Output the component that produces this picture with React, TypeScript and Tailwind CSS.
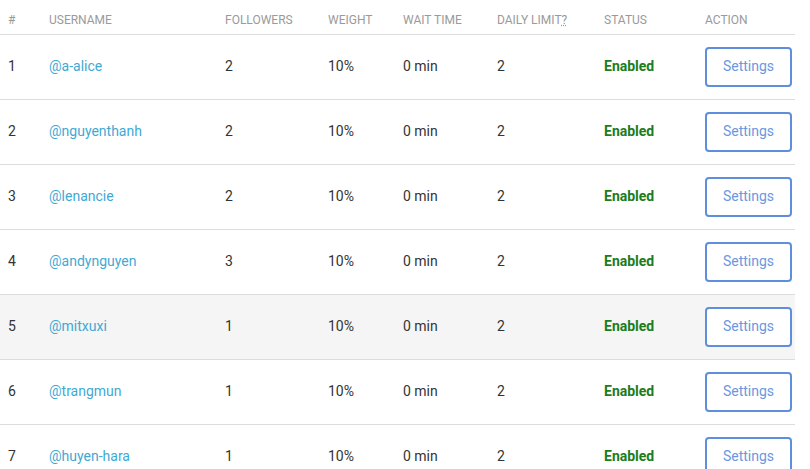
const rows = [
  { id: 1, user: "@a-alice", followers: 2 },
  { id: 2, user: "@nguyenthanh", followers: 2 },
  { id: 3, user: "@lenancie", followers: 2 },
  { id: 4, user: "@andynguyen", followers: 3 },
  { id: 5, user: "@mitxuxi", followers: 1 },
  { id: 6, user: "@trangmun", followers: 1 },
  { id: 7, user: "@huyen-hara", followers: 1 },
];

export default function App() {
  return (
    <div className="w-[810px] h-[469px] overflow-hidden bg-white font-['Roboto',sans-serif] text-[14px] text-[#333]">
      <table className="w-[795px] table-fixed border-collapse">
        <colgroup>
          <col className="w-[41px]" />
          <col className="w-[176px]" />
          <col className="w-[103px]" />
          <col className="w-[75px]" />
          <col className="w-[94px]" />
          <col className="w-[107px]" />
          <col className="w-[101px]" />
          <col className="w-[98px]" />
        </colgroup>
        <thead>
          <tr className="h-[34px] border-b border-[#dcdcdc] text-left text-[12px] uppercase text-[#9a9a9a]">
            <th className="pl-2 pb-[5px] align-bottom font-normal">#</th>
            <th className="pl-2 pb-[5px] align-bottom font-normal">Username</th>
            <th className="pl-2 pb-[5px] align-bottom font-normal">Followers</th>
            <th className="pl-2 pb-[5px] align-bottom font-normal">Weight</th>
            <th className="pl-2 pb-[5px] align-bottom font-normal">Wait time</th>
            <th className="pl-2 pb-[5px] align-bottom font-normal">
              Daily limit
              <abbr className="underline decoration-dotted" title="Daily limit">?</abbr>
            </th>
            <th className="pl-2 pb-[5px] align-bottom font-normal">Status</th>
            <th className="pl-2 pb-[5px] align-bottom font-normal">Action</th>
          </tr>
        </thead>
        <tbody>
          {rows.map((r) => (
            <tr
              key={r.id}
              className={`h-[65px] border-b border-[#dcdcdc] ${r.id === 5 ? "bg-[#f5f5f5]" : ""}`}
            >
              <td className="pl-2">{r.id}</td>
              <td className="pl-2 text-[#3fa9d4]">{r.user}</td>
              <td className="pl-2">{r.followers}</td>
              <td className="pl-2">10%</td>
              <td className="pl-2">0 min</td>
              <td className="pl-2">2</td>
              <td className="pl-2 font-bold text-[#1b7d1b]">Enabled</td>
              <td className="pl-2">
                <button className="w-[87px] h-[40px] rounded-[4px] border-2 border-[#5f8fdc] bg-white text-[14px] text-[#6b97e0]">
                  Settings
                </button>
              </td>
            </tr>
          ))}
        </tbody>
      </table>
    </div>
  );
}
